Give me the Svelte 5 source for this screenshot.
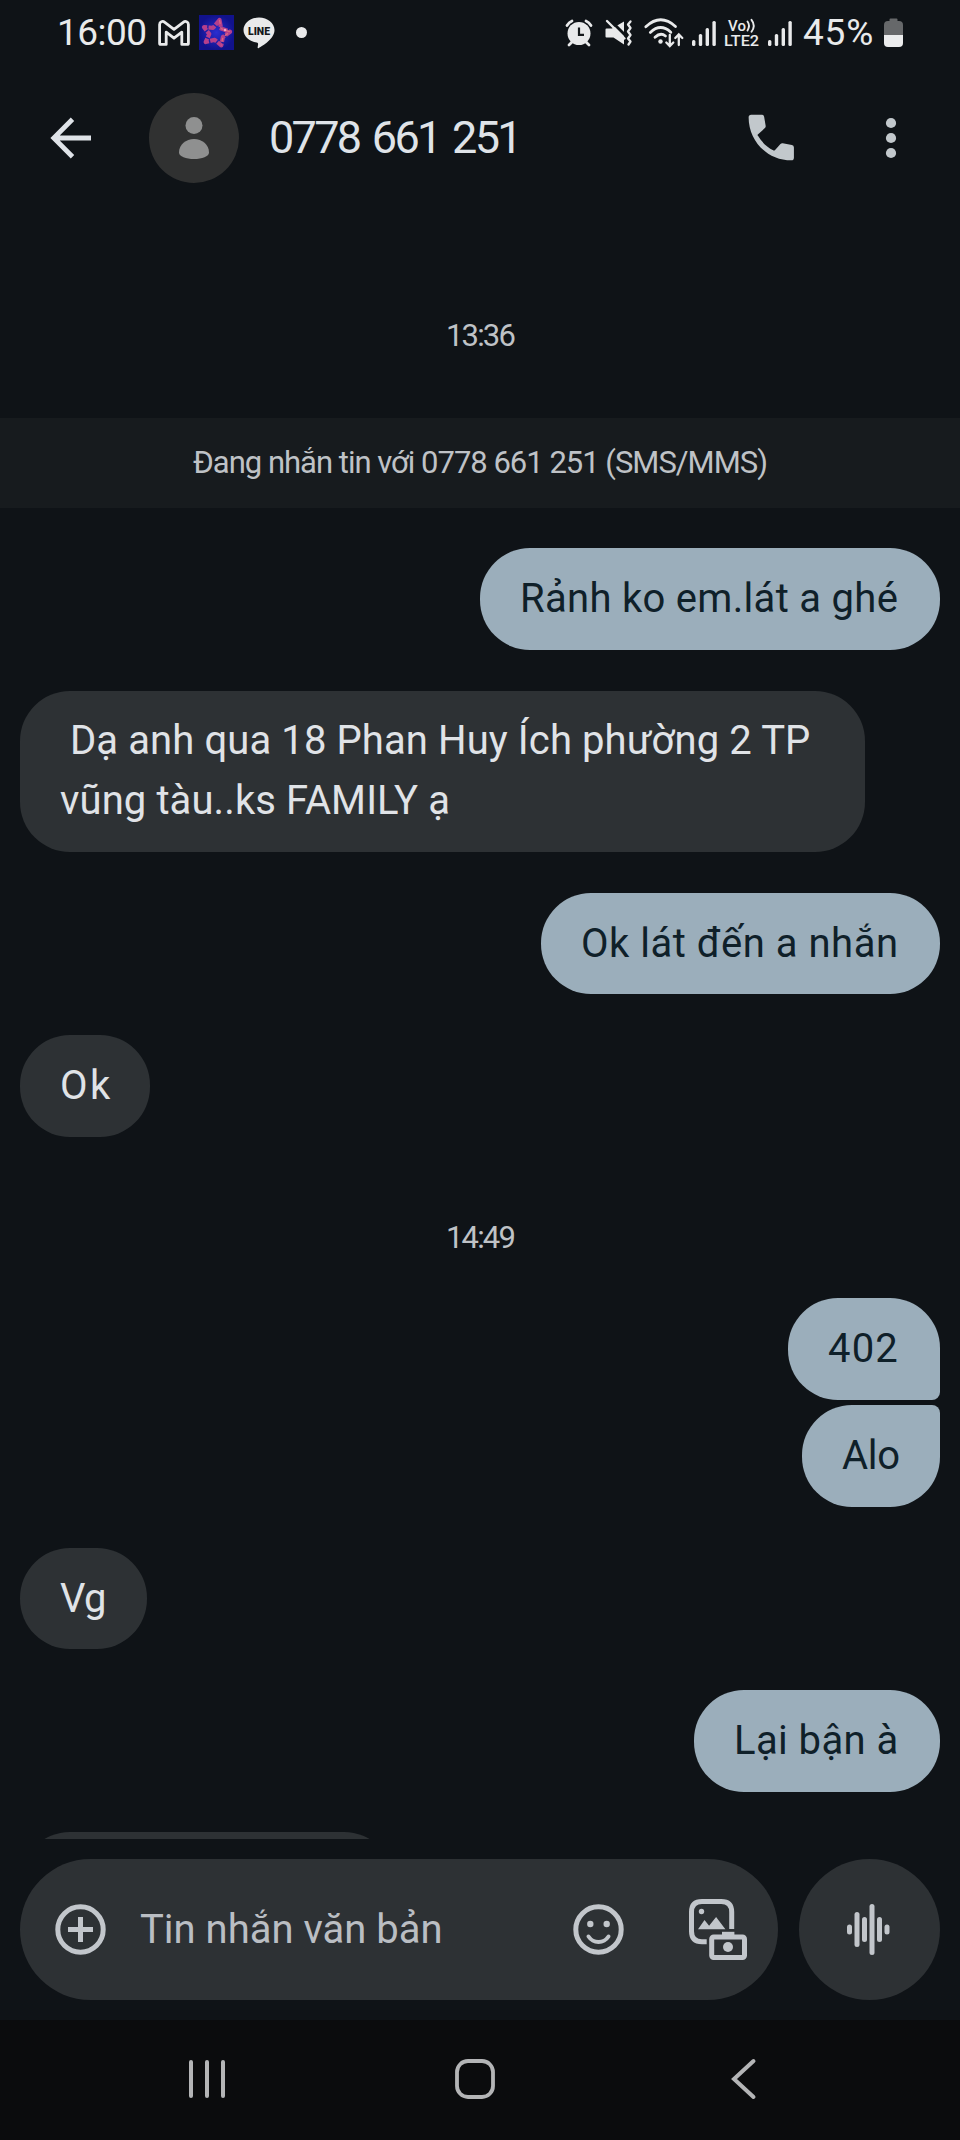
<script lang="ts">
    type Item = {
        kind: 'in' | 'out' | 'time';
        lines: string[];
        width?: number;
        spacing?: number;
        group?: 'first' | 'last';
    };

    const contact = '0778 661 251';

    const items: Item[] = [
        { kind: 'out', lines: ['Rảnh ko em.lát a ghé'], width: 460, spacing: 0.3 },
        {
            kind: 'in',
            lines: [' Dạ anh qua 18 Phan Huy Ích phường 2 TP', 'vũng tàu..ks FAMILY ạ'],
            width: 845,
            spacing: 0.1
        },
        { kind: 'out', lines: ['Ok lát đến a nhắn'], width: 399, spacing: 0.5 },
        { kind: 'in', lines: ['Ok'], width: 130, spacing: 2.5 },
        { kind: 'time', lines: ['14:49'] },
        { kind: 'out', lines: ['402'], width: 152, spacing: 1.2, group: 'first' },
        { kind: 'out', lines: ['Alo'], width: 138, spacing: -0.3, group: 'last' },
        { kind: 'in', lines: ['Vg'], width: 127, spacing: -0.5 },
        { kind: 'out', lines: ['Lại bận à'], width: 246, spacing: 0.4 },
        { kind: 'in', lines: [], width: 374, spacing: 0 }
    ];

    const signal = [6, 12, 18, 25];

    const wave = [
        { x: 2.5, h: 10 },
        { x: 10, h: 35 },
        { x: 17.5, h: 25 },
        { x: 25, h: 51 },
        { x: 32.5, h: 25 },
        { x: 40, h: 10 }
    ];
</script>

{#snippet signalBars()}
    <svg class="signal" width="24" height="26" viewBox="0 0 24 26">
        {#each signal as h, i}
            <rect x={i * 6.8} y={26 - h} width="3.4" height={h} rx="1.5" fill="#e9eaeb" />
        {/each}
    </svg>
{/snippet}

<div class="phone">
    <div class="status">
        <span class="clock">16:00</span>
        <svg class="gmail" width="32" height="26" viewBox="0 0 32 26" fill="none" stroke="#e9eaeb" stroke-width="2.8" stroke-linejoin="round">
            <path d="M1.6 4.6v18.6q0 1.2 1.2 1.2h5.4V12.2l7.8 6 7.8-6v12.2h5.4q1.2 0 1.2-1.2V4.6c0-3-3-4-5.2-2.3L16 9.3 6.8 2.3C4.6.6 1.6 1.6 1.6 4.6z" />
        </svg>
        <svg class="star" width="35" height="35" viewBox="0 0 35 35">
            <defs>
                <radialGradient id="sky">
                    <stop offset="0" stop-color="#2a2ed0" />
                    <stop offset="1" stop-color="#11128c" />
                </radialGradient>
            </defs>
            <rect width="35" height="35" fill="url(#sky)" />
            <g fill="none" stroke="#b53f8c" stroke-width="4.2" stroke-linejoin="round">
                <path d="M20.500 5l1.600 8.600 9 3.200-7.200 5.200-1.600 8.400-6.600-5.600-9 2.200 3.600-8-5.300-6.800 9.200.6z" stroke-dasharray="7 1.400" />
            </g>
            <path d="M20.500 5l1.600 8.600 9 3.200-7.200 5.200-1.600 8.400" fill="none" stroke="#dd6580" stroke-width="1.300" stroke-dasharray="4 3" />
            <circle cx="26" cy="15" r="1.300" fill="#f3a6c9" />
        </svg>
        <svg class="line" width="32" height="32" viewBox="0 0 32 32">
            <path d="M16 .6C7.4.6.5 6.2.5 13.1c0 6.3 5.7 11.5 13.2 12.4 1.4.3 1.5 1 1.3 2.6l-.4 2.300c-.1.7.5 1 1.2.6 3.7-2 15.7-9 15.7-17.9C31.500 6.200 24.600.6 16 .6z" fill="#e9eaeb" />
            <text x="5" y="17.600" textLength="22" lengthAdjust="spacingAndGlyphs" font-size="10.500" font-weight="900" fill="#14181b">LINE</text>
        </svg>
        <i class="dot"></i>

        <svg class="alarm" width="28" height="28" viewBox="0 0 28 28">
            <g fill="none" stroke="#e9eaeb" stroke-width="2.800" stroke-linecap="round">
                <path d="M2 6.500Q4 3.300 7 2M26 6.500Q24 3.300 21 2M7 23l-3 3M21 23l3 3" />
            </g>
            <circle cx="14" cy="14.500" r="11.500" fill="#e9eaeb" />
            <path d="M14 8.500v7.300h5" fill="none" stroke="#14181b" stroke-width="2.200" />
        </svg>
        <svg class="mute" width="28" height="28" viewBox="0 0 28 28">
            <path d="M1.500 9.500h5.500L19 2.500v23L8.500 18.500H1.500q-1 0-1-1v-7q0-1 1-1z" fill="#e9eaeb" />
            <path d="M4.500.5L21.500 17.500" stroke="#0f1317" stroke-width="3" />
            <path d="M2 2l17.500 17.500" stroke="#e9eaeb" stroke-width="2.400" stroke-linecap="round" />
            <path d="M25.500 2.500l-2.500 3 2.500 3.500-2.500 3.500 2.500 3.500-2.500 3.500 2.500 3-2 3" fill="none" stroke="#e9eaeb" stroke-width="2.300" stroke-linejoin="round" stroke-linecap="round" />
        </svg>
        <svg class="wifi" width="40" height="30" viewBox="0 0 40 30">
            <g fill="none" stroke="#e9eaeb" stroke-width="2.800" stroke-linecap="round">
                <path d="M1.800 8.800Q16.500-5 31.500 8.500M6.300 14.400Q16.500 4.800 26.800 14.200M11 19.300Q16.500 14 21.500 18" />
                <path d="M25.800 17v10.500M22.300 24.500l3.500 3.600 3.500-3.600M34.800 27V17M31.300 20l3.500-3.600 3.500 3.600" stroke-width="2.300" />
            </g>
            <circle cx="16.500" cy="23.500" r="2.200" fill="#e9eaeb" />
        </svg>
        {@render signalBars()}
        <svg class="volte" width="36" height="34" viewBox="0 -3 36 34" fill="#e9eaeb">
            <text x="4" y="12" font-size="15" font-weight="500" textLength="18">Vo</text>
            <path d="M23.500 2.500q3 4 0 9M27.500.8q4.500 5.700 0 12" fill="none" stroke="#e9eaeb" stroke-width="1.900" stroke-linecap="round" />
            <text x="0" y="27" font-size="15.500" font-weight="500" textLength="35" lengthAdjust="spacingAndGlyphs">LTE2</text>
        </svg>
        {@render signalBars()}
        <span class="percent">45%</span>
        <svg class="battery" width="19" height="29" viewBox="0 0 19 29">
            <path d="M5.500 3V1.500q0-1 1-1h6q1 0 1 1V3H15q4 0 4 4v10H0V7q0-4 4-4z" fill="#66686a" />
            <path d="M0 17h19v8q0 4-4 4H4q-4 0-4-4z" fill="#ebeced" />
        </svg>
    </div>

    <header>
        <svg class="back" width="42" height="42" viewBox="0 0 42 42" fill="none" stroke="#dfe3e8" stroke-width="4.800">
            <path d="M22.500 2.200L3.800 21l18.700 18.800M3.800 21H41" />
        </svg>
        <div class="avatar">
            <svg width="30" height="42" viewBox="0 0 30 42" fill="#8f9090">
                <circle cx="15" cy="8.500" r="8.500" />
                <path d="M0 35.500C0 27.500 7 22 15 22s15 5.500 15 13.500C30 39.500 23 42 15 42S0 39.500 0 35.500z" />
            </svg>
        </div>
        <h1>{contact}</h1>
        <svg class="call" width="61" height="61" viewBox="0 0 24 24" fill="#c2c8cc">
            <path d="M6.620 10.790c-.3.300-.2.200 0 .4 1.500 2.600 3.500 4.500 6.200 5.900.1.100.3.100.5-.1l2.200-2.400q.4-.4.900-.3l3.600.7q.8.200.8.900v4.100q0 1-1 1C10.500 21 3 13.500 3 4q0-1 1-1h4.200q.8 0 .9.800l.6 3.600q.1.500-.3.900z" />
        </svg>
        <svg class="more" width="12" height="42" viewBox="0 0 12 42" fill="#c2c8cc">
            <circle cx="6" cy="6" r="5.100" />
            <circle cx="6" cy="21" r="5.100" />
            <circle cx="6" cy="36" r="5.100" />
        </svg>
    </header>

    <main>
        <time class="opening">13:36</time>
        <div class="notice"><span>Đang nhắn tin với {contact} (SMS/MMS)</span></div>
        {#each items as item}
            {#if item.kind === 'time'}
                <time>{item.lines[0]}</time>
            {:else}
                <div
                    class="bubble {item.kind} {item.group ?? ''}"
                    style="width:{item.width}px; letter-spacing:{item.spacing}px"
                >
                    {#each item.lines as line}
                        <p>{line}</p>
                    {/each}
                </div>
            {/if}
        {/each}
    </main>

    <footer>
        <div class="field">
            <svg width="51" height="51" viewBox="0 0 51 51" fill="none" stroke="#c2c6cb" stroke-width="5">
                <circle cx="25.500" cy="25.500" r="22.700" />
                <path d="M25.500 13v25M13 25.500h25" />
            </svg>
            <span class="placeholder">Tin nhắn văn bản</span>
            <svg class="emoji" width="51" height="51" viewBox="0 0 51 51" fill="none" stroke="#c2c6cb">
                <circle cx="25.500" cy="25.500" r="22.700" stroke-width="5" />
                <path d="M15.500 32.500q3.700 5.500 10 5.500t10-5.500" stroke-width="4" stroke-linecap="round" />
                <circle cx="17.300" cy="20" r="3.200" fill="#c2c6cb" stroke="none" />
                <circle cx="33.700" cy="20" r="3.200" fill="#c2c6cb" stroke="none" />
            </svg>
            <svg class="gallery" width="58" height="61" viewBox="0 0 58 61" fill="none" stroke="#c2c6cb" stroke-width="5">
                <path d="M17.700 42.700H13Q2.500 42.700 2.500 32.200V13Q2.500 2.500 13 2.500h19.200Q42.700 2.500 42.700 13v17" />
                <circle cx="12.500" cy="12.500" r="2.700" fill="#c2c6cb" stroke="none" />
                <path d="M9 30.300l6.500-9.200 4.600 5.600 7-8.600 9.300 12.200z" fill="#c2c6cb" stroke="none" />
                <rect x="22.700" y="38" width="32.800" height="20.500" rx="2" />
                <path d="M33 37v-4.200h12.400V37" fill="#c2c6cb" stroke="none" />
                <circle cx="39" cy="48" r="5" fill="#c2c6cb" stroke="none" />
            </svg>
        </div>
        <div class="voice">
            <svg width="43" height="51" viewBox="0 0 43 51" fill="#c2c6cb">
                {#each wave as bar}
                    <rect x={bar.x - 2.5} y={25.5 - bar.h / 2} width="5" height={bar.h} rx="2.500" />
                {/each}
            </svg>
        </div>
    </footer>

    <nav>
        <svg width="36" height="40" viewBox="0 0 36 40" stroke="#b4b5b6" stroke-width="4" stroke-linecap="round">
            <path d="M2 3v34M18 3v34M34 3v34" />
        </svg>
        <svg class="home" width="40" height="40" viewBox="0 0 40 40" fill="none" stroke="#b4b5b6" stroke-width="3.800">
            <rect x="2" y="2" width="36" height="36" rx="11" />
        </svg>
        <svg class="prev" width="26" height="40" viewBox="0 0 26 40" fill="none" stroke="#b4b5b6" stroke-width="4" stroke-linecap="round">
            <path d="M22.500 2L3 20l19.500 18" />
        </svg>
    </nav>
</div>

<style>
    :global(body) {
        background: #0f1317;
    }

    .phone {
        display: flex;
        flex-direction: column;
        width: 960px;
        height: 2140px;
        overflow: hidden;
        background: #0f1317;
        font-family: Roboto, 'Noto Sans', sans-serif;
        box-sizing: border-box;
    }

    svg {
        display: block;
        flex: none;
        overflow: visible;
    }

    .status {
        display: flex;
        align-items: center;
        height: 65px;
        padding-right: 57px;
        padding-left: 57px;
        color: #e9eaeb;
        white-space: nowrap;
    }

    .clock,
    .percent {
        font-size: 37px;
        line-height: 64px;
    }

    .clock {
        width: 101px;
        letter-spacing: -0.5px;
    }

    .star {
        margin-left: 9px;
    }

    .line {
        margin-left: 9px;
    }

    .dot {
        width: 11px;
        height: 11px;
        margin: 0 auto 0 21px;
        border-radius: 50%;
        background: #e9eaeb;
    }

    .mute {
        margin-left: 12px;
    }

    .wifi {
        margin-left: 11px;
    }

    .signal {
        margin-left: 8px;
    }

    .volte {
        margin-left: 8px;
    }

    .percent {
        width: 75px;
        margin-left: 11px;
        letter-spacing: 0.8px;
    }

    .battery {
        margin-left: 6px;
    }

    header {
        display: flex;
        align-items: center;
        height: 145px;
        padding: 0 63px 0 50px;
        color: #dfe3e8;
    }

    .avatar {
        display: flex;
        align-items: center;
        justify-content: center;
        width: 90px;
        height: 90px;
        margin-left: 57px;
        border-radius: 50%;
        background: #303131;
    }

    h1 {
        flex: 1;
        margin: 0 0 0 30px;
        font-size: 45px;
        font-weight: 400;
        letter-spacing: -2.7px;
        word-spacing: 4px;
        white-space: nowrap;
    }

    .more {
        margin-left: 83px;
    }

    main {
        display: flex;
        flex-direction: column;
        height: 1629px;
        overflow: hidden;
        padding: 0 20px;
    }

    time {
        margin-top: 81px;
        color: #bfc2c6;
        font-size: 31px;
        line-height: 40px;
        letter-spacing: -1.8px;
        text-align: center;
        flex: none;
    }

    .opening {
        margin-top: 106px;
    }

    .notice {
        flex: none;
        height: 90px;
        margin: 61.5px -20px 0;
        background: #171b1e;
        color: #bfc2c6;
        font-size: 31px;
        line-height: 90px;
        letter-spacing: -1px;
        text-align: center;
        white-space: nowrap;
    }

    .bubble {
        flex: none;
        box-sizing: border-box;
        min-height: 101.5px;
        margin-top: 40.8px;
        padding: 20.75px 0 20.75px 40px;
        border-radius: 50px;
        font-size: 40px;
        line-height: 60px;
    }

    .bubble p {
        margin: 0;
        white-space: pre;
    }

    .in {
        align-self: flex-start;
        background: #2d3134;
        color: #e0e3e7;
    }

    .out {
        align-self: flex-end;
        background: #9baebb;
        color: #0f2029;
    }

    .first {
        border-bottom-right-radius: 8px;
    }

    .last {
        margin-top: 5.5px;
        border-top-right-radius: 8px;
    }

    footer {
        display: flex;
        justify-content: space-between;
        padding: 20px;
    }

    .field {
        display: flex;
        align-items: center;
        box-sizing: border-box;
        width: 758px;
        height: 141px;
        padding: 0 31px 0 35px;
        border-radius: 71px;
        background: #2d3134;
    }

    .placeholder {
        flex: 1;
        margin-left: 34px;
        color: #babec3;
        font-size: 40px;
        white-space: nowrap;
    }

    .gallery {
        margin-left: 65px;
    }

    .voice {
        display: flex;
        align-items: center;
        justify-content: center;
        box-sizing: border-box;
        width: 141px;
        height: 141px;
        padding-right: 3px;
        border-radius: 50%;
        background: #2d3134;
    }

    nav {
        display: flex;
        flex: 1;
        align-items: center;
        padding: 0 0 2px 189px;
        background: #0b0c0d;
    }

    .home {
        margin-left: 230px;
    }

    .prev {
        margin-left: 236px;
    }
</style>
